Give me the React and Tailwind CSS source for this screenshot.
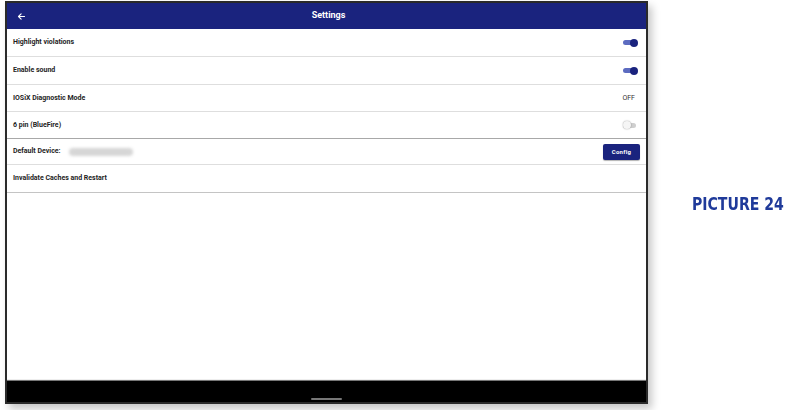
// Settings screen inside a tablet frame, with caption on the right
const Toggle = ({ on }) => (
  <div className="relative w-[15px] h-[8px] flex items-center">
    <div className={`w-[13px] h-[5px] rounded-full ${on ? 'bg-[#5c6bc0]' : 'bg-[#cfcfcf]'}`} />
    <div
      className={`absolute top-0 w-[8px] h-[8px] rounded-full ${on ? 'right-0 bg-[#1a237e]' : 'left-0 bg-[#f5f5f5] shadow-[0_0_1.5px_rgba(0,0,0,0.45)]'}`}
    />
  </div>
);

const Row = ({ label, children, strong, h = 'h-[28px]' }) => (
  <div className={`${h} flex items-center justify-between pl-[6px] pr-[8px] border-b ${strong ? 'border-[#a8a8a8]' : 'border-[#dedede]'}`}>
    <span className="text-[7px] font-bold text-[#1e1e1e]">{label}</span>
    {children}
  </div>
);

const App = () => {
  return (
    <div className="w-[787px] h-[410px] bg-white flex items-start" style={{ fontFamily: 'Roboto, "Liberation Sans", sans-serif' }}>
      <div className="shrink-0 ml-[5px] mt-[1px] w-[643px] h-[403px] border-2 border-[#2a2a2a] bg-white flex flex-col shadow-[4px_5px_8px_rgba(0,0,0,0.22)]">
        {/* Header */}
        <div className="h-[26px] bg-[#1a237e] flex items-center relative">
          <svg className="absolute left-[10px]" width="9" height="9" viewBox="0 0 24 24" fill="none" stroke="#ffffff" strokeWidth="3" strokeLinecap="round" strokeLinejoin="round">
            <path d="M20 12H5" />
            <path d="M11 5l-7 7 7 7" />
          </svg>
          <span className="w-full text-center text-white text-[9px] font-bold ml-[4px]">Settings</span>
        </div>

        {/* Rows */}
        <div className="flex flex-col">
          <Row label="Highlight violations"><Toggle on /></Row>
          <Row label="Enable sound"><Toggle on /></Row>
          <Row label="IOSiX Diagnostic Mode" h="h-[27px]">
            <span className="text-[7px] text-[#333] mr-[3px]">OFF</span>
          </Row>
          <Row label="6 pin (BlueFire)" strong h="h-[27px]"><Toggle /></Row>
          <div className="h-[26px] flex items-center justify-between pl-[6px] pr-[6px] border-b border-[#dedede]">
            <div className="flex items-center gap-[8px]">
              <span className="text-[7px] font-bold text-[#1e1e1e]">Default Device:</span>
              <div className="w-[64px] h-[8px] rounded-full bg-[#d6d6d6] blur-[1.5px]" />
            </div>
            <button className="w-[37px] h-[16px] bg-[#1a237e] rounded-[2px] text-white text-[6px] font-bold tracking-[0.3px] shadow-[0_1px_1px_rgba(0,0,0,0.3)]">
              Config
            </button>
          </div>
          <div className="h-[28px] flex items-center pl-[6px] border-b border-[#c4c4c4]">
            <span className="text-[7px] font-bold text-[#1e1e1e]">Invalidate Caches and Restart</span>
          </div>
        </div>

        <div className="flex-1 border-b border-[#eeeeee]" />

        {/* Navigation bar */}
        <div className="h-[22px] bg-black flex items-end justify-center pb-[2px] border-t border-[#777]">
          <div className="w-[31px] h-[2px] rounded-full bg-[#777]" />
        </div>
      </div>

      <div
        className="shrink-0 whitespace-nowrap ml-[44px] mt-[192px] text-[17px] font-bold text-[#1f3a9a] origin-left scale-x-[0.92]"
        style={{ fontFamily: '"Liberation Sans Narrow", "DejaVu Sans Condensed", sans-serif' }}
      >
        PICTURE 24
      </div>
    </div>
  );
};

export default App;
